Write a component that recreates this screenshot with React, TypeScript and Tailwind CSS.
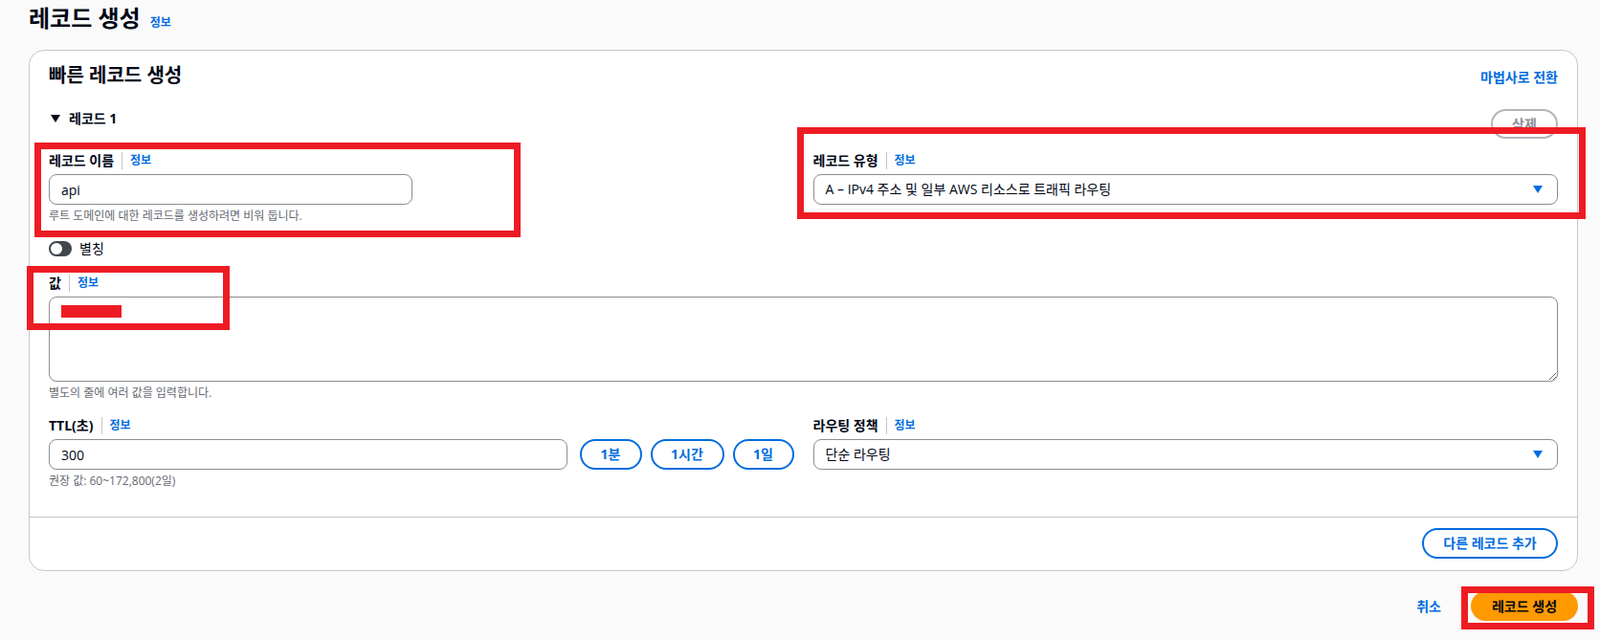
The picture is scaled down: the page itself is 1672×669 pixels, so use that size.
import React from 'react'

function Label({ text }: { text: string }) {
  return (
    <div className="flex h-5 items-center">
      <span className="text-sm font-bold text-[#000716]">{text}</span>
      <span className="mx-[8px] h-[18px] border-l border-[#c6c6cd]" />
      <span className="text-xs font-bold text-[#006ce0]">정보</span>
    </div>
  )
}

function Caret() {
  return (
    <svg width="10" height="8" viewBox="0 0 10 8">
      <path d="M0 0h10L5 8z" fill="#006ce0" />
    </svg>
  )
}

function Select({ value }: { value: string }) {
  return (
    <div className="mt-1 flex h-8 items-center justify-between rounded-lg border border-[#8c8c94] bg-white pl-3 pr-[15px]">
      <span className="text-sm text-[#000716]">{value}</span>
      <Caret />
    </div>
  )
}

function Help({ text }: { text: string }) {
  return <p className="mt-[4px] text-xs leading-4 text-[#656871]">{text}</p>
}

function PillButton({ label, width }: { label: string; width: string }) {
  return (
    <button
      className={`h-8 rounded-full border-2 border-[#006ce0] bg-white text-sm font-bold text-[#006ce0] ${width}`}
    >
      {label}
    </button>
  )
}

export default function App() {
  return (
    <div className="relative min-h-[669px] bg-[#fafafa] pl-[30px] pr-[23px] pt-[4px] font-['Open_Sans','Noto_Sans_CJK_KR',sans-serif] text-[#000716]">
      <div className="flex items-baseline gap-[10px]">
        <h1 className="text-2xl leading-[30px] font-bold">레코드 생성</h1>
        <span className="text-xs font-bold text-[#006ce0]">정보</span>
      </div>

      <div className="mt-[18px] rounded-2xl border border-[#c6c6cd] bg-white">
        <div className="px-5 pt-[14px] pb-[29px]">
          <div className="flex items-end justify-between">
            <h2 className="text-xl leading-6 font-bold">빠른 레코드 생성</h2>
            <span className="text-sm font-bold text-[#006ce0]">마법사로 전환</span>
          </div>

          <div className="mt-[23px] flex items-start justify-between">
            <div className="flex h-5 items-center gap-[9px] pl-[2px]">
              <svg width="10" height="8" viewBox="0 0 10 8">
                <path d="M0 0h10L5 8z" fill="#000716" />
              </svg>
              <span className="text-sm font-bold">레코드 1</span>
            </div>
            <button className="h-[31px] w-[70px] rounded-full border-2 border-[#b4b4bb] bg-white text-sm font-bold text-[#8c8c94]">
              삭제
            </button>
          </div>

          <div className="mt-[13px] grid grid-cols-2 gap-x-5">
            <div>
              <Label text="레코드 이름" />
              <input
                readOnly
                value="api"
                className="mt-1 block h-8 w-[380px] rounded-lg border border-[#8c8c94] px-3 text-sm outline-none"
              />
              <Help text="루트 도메인에 대한 레코드를 생성하려면 비워 둡니다." />
            </div>
            <div>
              <Label text="레코드 유형" />
              <Select value="A – IPv4 주소 및 일부 AWS 리소스로 트래픽 라우팅" />
            </div>
          </div>

          <div className="mt-4 flex h-5 items-center gap-2">
            <div className="flex h-4 w-6 items-center rounded-full bg-[#424650] pl-[2px]">
              <div className="h-3 w-3 rounded-full bg-white" />
            </div>
            <span className="text-sm">별칭</span>
          </div>

          <div className="mt-4">
            <Label text="값" />
            <textarea
              readOnly
              className="mt-1 block h-[89px] w-full resize-y rounded-lg border border-[#8c8c94] px-3 py-1 text-sm outline-none"
            />
            <Help text="별도의 줄에 여러 값을 입력합니다." />
          </div>

          <div className="mt-[16px] grid grid-cols-2 gap-x-5">
            <div>
              <Label text="TTL(초)" />
              <div className="mt-1 flex items-center">
                <input
                  readOnly
                  value="300"
                  className="block h-8 min-w-0 flex-1 rounded-lg border border-[#8c8c94] px-3 text-sm outline-none"
                />
                <div className="ml-[13px] flex gap-[9px]">
                  <PillButton label="1분" width="w-[65px]" />
                  <PillButton label="1시간" width="w-[77px]" />
                  <PillButton label="1일" width="w-[64px]" />
                </div>
              </div>
              <Help text="권장 값: 60~172,800(2일)" />
            </div>
            <div>
              <Label text="라우팅 정책" />
              <Select value="단순 라우팅" />
            </div>
          </div>
        </div>

        <div className="flex justify-end border-t border-[#c6c6cd] px-5 pt-[11px] pb-3">
          <button className="h-8 w-[142px] rounded-full border-2 border-[#006ce0] bg-white text-sm font-bold text-[#006ce0]">
            다른 레코드 추가
          </button>
        </div>
      </div>

      <div className="mt-[21px] flex items-center justify-end gap-[31px]">
        <span className="text-sm font-bold text-[#006ce0]">취소</span>
        <button className="h-[31px] w-[112px] rounded-full bg-[#ff9900] text-sm font-bold text-[#000716]">
          레코드 생성
        </button>
      </div>

      {/* annotation overlays */}
      <div className="absolute left-[64px] top-[319px] h-[13px] w-[63px] bg-[#ed1c24]" />
      <div className="pointer-events-none absolute left-[36px] top-[149px] h-[99px] w-[508px] border-[7px] border-[#ed1c24]" />
      <div className="pointer-events-none absolute left-[28px] top-[278px] h-[67px] w-[212px] border-[7px] border-[#ed1c24]" />
      <div className="pointer-events-none absolute left-[833px] top-[133px] h-[96px] w-[824px] border-[7px] border-[#ed1c24]" />
      <div className="pointer-events-none absolute left-[1527px] top-[613px] h-[45px] w-[139px] border-[7px] border-[#ed1c24]" />
    </div>
  )
}
